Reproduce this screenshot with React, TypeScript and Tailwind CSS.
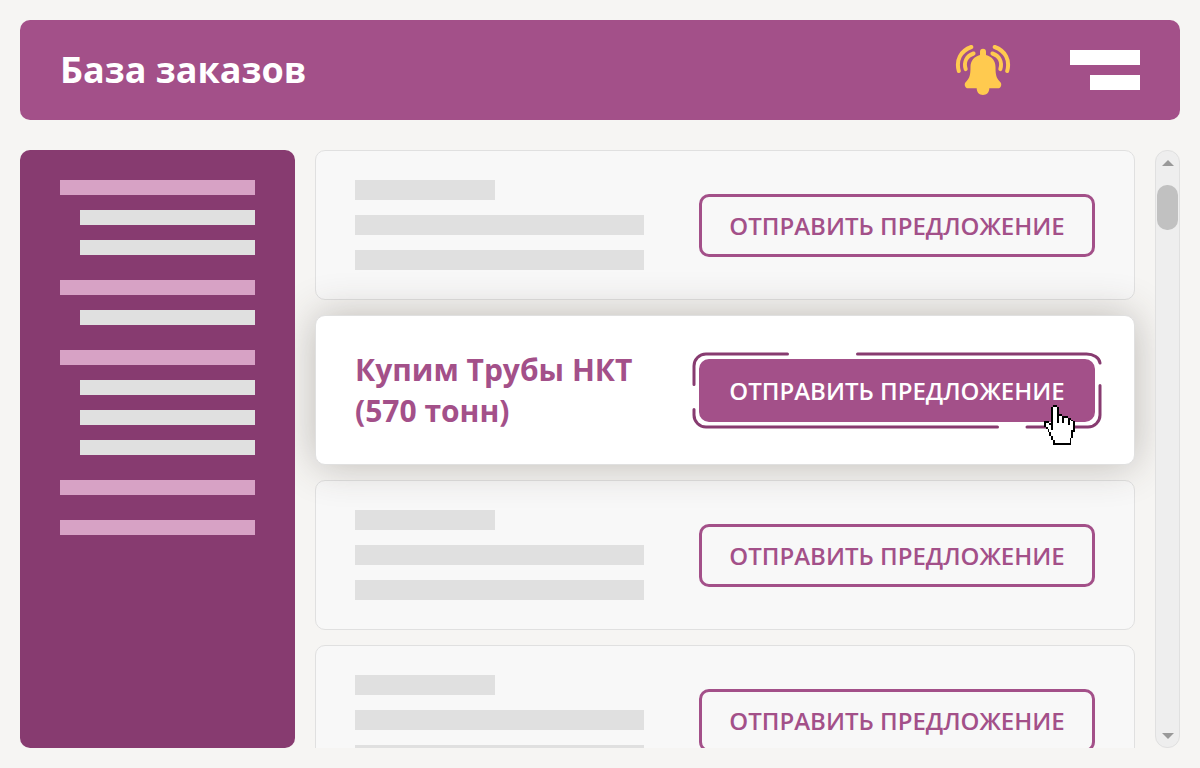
import React from "react";

const HAND = [
  ".....XX..........",
  "....XooX.........",
  "....XooX.........",
  "....XooX.........",
  "....XooX.........",
  "....XooXXX.......",
  "....XooXooXXX....",
  "....XooXooXooXX..",
  "....XooXooXooXoX.",
  "XXX.XooXooXooXooX",
  "XooXXooooooooXooX",
  "XoooXoooooooooooX",
  ".XooXoooooooooooX",
  "..XoXoooooooooooX",
  "..XooooooooooooXX",
  "...XoooooooooooX.",
  "...XoooooooooooX.",
  "....XooooooooooX.",
  "....XoooooooooX..",
  ".....XooooooooX..",
  ".....XooooooooX..",
  ".....XXXXXXXXXX..",
];

function HandCursor() {
  return (
    <svg
      aria-hidden="true"
      viewBox="0 0 17 22"
      preserveAspectRatio="none"
      shapeRendering="crispEdges"
      className="pointer-events-none absolute right-5 -bottom-[23px] h-10 w-[31px]"
    >
      {HAND.flatMap((row, y) =>
        row.split("").map((c, x) =>
          c === "." ? null : (
            <rect key={`${x}-${y}`} x={x} y={y} width="1" height="1" fill={c === "X" ? "#000" : "#fff"} />
          ),
        ),
      )}
    </svg>
  );
}

function BellIcon() {
  return (
    <svg aria-hidden="true" viewBox="0 0 56 52" className="h-[52px] w-14">
      <path
        fill="#ffca4f"
        d="M25 11V7.700a3 3 0 0 1 6 0V11C37 12.500 40.500 17 40.500 23C40.500 31 41.500 34 44.500 37.200C46.500 39 46.500 40.500 46 42C45.500 43.600 44.500 44.300 43 44.300H34.300C34.300 48.500 31.700 51 28 51S21.700 48.500 21.700 44.300H13C11.500 44.300 10.500 43.600 10 42C9.500 40.500 9.500 39 11.500 37.200C14.500 34 15.500 31 15.500 23C15.500 17 19 12.500 25 11Z"
      />
      <g fill="none" stroke="#ffca4f" strokeWidth="4" strokeLinecap="round">
        <path d="M16.300 3C5.500 7 .800 16 3.800 27" />
        <path d="M18.600 9.500C11.500 12 8.500 18 10.700 25.200" />
        <path d="M39.700 3C50.500 7 55.200 16 52.200 27" />
        <path d="M37.400 9.500C44.500 12 47.500 18 45.300 25.200" />
      </g>
    </svg>
  );
}

function OfferFrame() {
  return (
    <svg
      aria-hidden="true"
      viewBox="0 0 410 77"
      preserveAspectRatio="none"
      fill="none"
      stroke="#873b70"
      strokeWidth="3"
      strokeLinecap="round"
      className="pointer-events-none absolute -inset-[7px] h-[77px] w-[410px]"
    >
      <path d="M2 32.500V14A12 12 0 0 1 14 2H95.500" />
      <path d="M165.500 2H394.500A13.500 10 0 0 1 408 11" />
      <path d="M408 33.500V63A12 12 0 0 1 396 75H335" />
      <path d="M305.500 75H14A12 12 0 0 1 2 63V57.500" />
    </svg>
  );
}

const OFFER_LABEL = "ОТПРАВИТЬ ПРЕДЛОЖЕНИЕ";

function PlaceholderCard() {
  return (
    <article className="flex h-[150px] shrink-0 items-center gap-[55px] rounded-[10px] border border-[#e0e0e0] bg-[#f8f8f8] px-[39px]">
      <div className="flex flex-1 flex-col gap-[15px]">
        <div className="h-5 w-[140px] bg-[#e0e0e0]" />
        <div className="h-5 bg-[#e0e0e0]" />
        <div className="h-5 bg-[#e0e0e0]" />
      </div>
      <button
        type="button"
        className="w-[396px] shrink-0 rounded-[10px] border-3 border-[#a35089] py-3 text-2xl leading-[33px] font-semibold whitespace-nowrap text-[#a35089]"
      >
        {OFFER_LABEL}
      </button>
    </article>
  );
}

function ActiveCard() {
  return (
    <article className="relative z-10 flex h-[150px] shrink-0 items-center justify-between gap-5 rounded-[10px] border border-[#e0e0e0] bg-white px-[39px] shadow-[0_0_40px_rgba(60,50,40,0.3)]">
      <h2 className="text-[30px] leading-[41px] font-bold text-[#a35089]">
        Купим Трубы НКТ
        <br />
        (570 тонн)
      </h2>
      <div className="relative shrink-0">
        <OfferFrame />
        <button
          type="button"
          className="block w-[396px] rounded-[10px] border-3 border-[#a35089] bg-[#a35089] py-3 text-2xl leading-[33px] font-semibold whitespace-nowrap text-white"
        >
          {OFFER_LABEL}
        </button>
        <HandCursor />
      </div>
    </article>
  );
}

const MENU = [2, 1, 3, 0, 0];

function Sidebar() {
  return (
    <nav className="flex w-[275px] shrink-0 flex-col gap-[25px] rounded-[10px] bg-[#873b70] px-10 py-[30px]">
      {MENU.map((children, i) => (
        <div key={i} className="flex flex-col gap-[15px]">
          <div className="h-[15px] bg-[#d7a2c5]" />
          {Array.from({ length: children }, (_, j) => (
            <div key={j} className="ml-5 h-[15px] bg-[#e0e0e0]" />
          ))}
        </div>
      ))}
    </nav>
  );
}

function ScrollBar() {
  return (
    <div className="flex w-[25px] shrink-0 flex-col items-center rounded-[12px] border border-[#e0e0e0] bg-[#eeeeee] pt-[9px] pb-2">
      <svg aria-hidden="true" viewBox="0 0 12 6" className="h-1.5 w-3">
        <path d="M0 6L6 0l6 6z" fill="#999" />
      </svg>
      <div className="mt-[19px] h-[45px] w-[21px] rounded-[10px] bg-[#c1c1c1]" />
      <svg aria-hidden="true" viewBox="0 0 12 6" className="mt-auto h-1.5 w-3">
        <path d="M0 0h12L6 6z" fill="#999" />
      </svg>
    </div>
  );
}

export default function App() {
  return (
    <div className="flex h-screen flex-col gap-[30px] bg-[#f6f5f3] p-5 font-['Open_Sans','Noto_Sans',sans-serif]">
      <header className="flex h-[100px] shrink-0 items-center rounded-[10px] bg-[#a35089] px-10 text-white">
        <h1 className="text-4xl leading-[50px] font-bold">База заказов</h1>
        <button type="button" aria-label="Уведомления" className="ml-auto">
          <BellIcon />
        </button>
        <button type="button" aria-label="Меню" className="ml-[59px] flex w-[70px] flex-col items-end gap-2.5">
          <span className="h-[15px] w-full bg-white" />
          <span className="h-[15px] w-[50px] bg-white" />
        </button>
      </header>
      <div className="flex min-h-0 flex-1">
        <Sidebar />
        <main className="flex min-w-0 flex-1 flex-col gap-[15px] overflow-hidden px-5">
          <PlaceholderCard />
          <ActiveCard />
          <PlaceholderCard />
          <PlaceholderCard />
        </main>
        <ScrollBar />
      </div>
    </div>
  );
}
